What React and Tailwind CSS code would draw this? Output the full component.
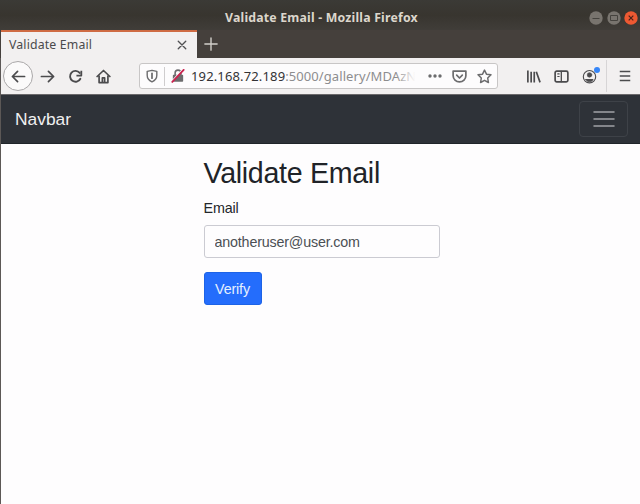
import React from 'react';

const ui = "font-['Noto_Sans','Open_Sans',sans-serif]";

function Icon({ children, className = '', size = 16 }) {
  return (
    <svg
      className={`shrink-0 ${className}`}
      width={size}
      height={size}
      viewBox="0 0 16 16"
      fill="none"
      stroke="currentColor"
      strokeWidth="1.8"
      strokeLinecap="round"
      strokeLinejoin="round"
    >
      {children}
    </svg>
  );
}

function TitleBar() {
  return (
    <header className="flex h-[30px] items-center bg-linear-to-b from-[#3b3a36] via-[#38352f] to-[#403d39] pt-[5px] pr-[2px]">
      <h1 className="ml-[225px] w-[194px] whitespace-nowrap text-[12.3px] leading-4 font-bold tracking-[0.2px] text-[#dcd6cc]">
        Validate Email - Mozilla Firefox
      </h1>
      <div className="ml-auto flex gap-[3.5px]">
        <svg width="14" height="14" viewBox="0 0 14 14" fill="none" stroke="#45433e">
          <circle cx="7" cy="7" r="6.7" fill="#78746e" stroke="none" />
          <path d="M3.5 7.5h7" />
        </svg>
        <svg width="14" height="14" viewBox="0 0 14 14" fill="none" stroke="#45433e">
          <circle cx="7" cy="7" r="6.7" fill="#78746e" stroke="none" />
          <path d="M3.5 4.5h7v5h-7z" />
        </svg>
        <svg width="14" height="14" viewBox="0 0 14 14" fill="none" stroke="#4a2118" strokeWidth="1.2">
          <circle cx="7" cy="7" r="6.7" fill="#ed5932" stroke="none" />
          <path d="m4.7 4.7 4.6 4.6m0-4.6L4.7 9.3" />
        </svg>
      </div>
    </header>
  );
}

function TabStrip() {
  return (
    <div className="flex h-7 bg-[#45403c] pl-px">
      <div className="flex w-[196px] items-center border-t-2 border-[#cf6b43] bg-[#f2f0f0] pl-2 pr-[9px]">
        <span className="whitespace-nowrap text-[12.3px] leading-4 tracking-[0.15px] text-[#4a4a4c]">Validate Email</span>
        <Icon size={12} className="ml-auto text-[#505052]">
          <path d="m3 3 10 10m0-10L3 13" />
        </Icon>
      </div>
      <Icon size={14} className="ml-[7px] mt-[7px] text-[#d2cfca]">
        <path d="M8 1v14M1 8h14" strokeWidth="1.6" />
      </Icon>
    </div>
  );
}

function AddressBar() {
  return (
    <div className="ml-[28px] flex h-[26px] w-[359px] shrink-0 items-center rounded-[3px] border border-[#c8c6c6] bg-[#fdfcfd] pl-[5px] pr-1 text-[#6c6c6e]">
      <Icon size={14}>
        <path d="M8 1.5 2.5 2.7v4.4c0 3.5 2 6 5.5 7.5 3.5-1.5 5.5-4 5.5-7.5V2.7z" strokeWidth="1.6" />
        <path d="M8 5v5.5" strokeWidth="2" />
      </Icon>
      <div className="ml-[5px] h-[19px] w-px bg-[#cfcdce]" />
      <Icon size={14} className="ml-1.5">
        <path d="M4.7 7V4.6a3.3 3.3 0 0 1 6.6 0V7" />
        <path d="M3 7.5h10v6.2H3z" fill="currentColor" />
        <path d="M2 12.7 12.5 1.5" stroke="#fdfcfd" strokeWidth="1.5" />
        <path d="M1.5 14.8 14.5 1" stroke="#ca234f" strokeWidth="2.1" />
      </Icon>
      <div className="relative ml-[6px] w-[229px] overflow-hidden whitespace-nowrap text-[13px] leading-[18px] text-[#8d8d8f]">
        <span className="tracking-[0.14px] text-[#333335]">192.168.72.189</span>
        <span className="tracking-[0.08px]">:5000/gallery/MDAzNW</span>
        <div className="absolute inset-y-0 right-0 w-6 bg-linear-to-r from-transparent to-[#fdfcfd] to-80%" />
      </div>
      <svg width="14" height="4" viewBox="0 0 14 4" fill="currentColor" className="ml-[8px] shrink-0">
        <circle cx="2" cy="2" r="1.7" />
        <circle cx="7" cy="2" r="1.7" />
        <circle cx="12" cy="2" r="1.7" />
      </svg>
      <Icon size={15} className="ml-[10px]">
        <path d="M1.2 2.2h13.6v5a6.8 6.6 0 0 1-13.6 0z" />
        <path d="m5 6.6 3 3 3-3" />
      </Icon>
      <Icon size={15} className="ml-[10px]">
        <path d="m8 1.2 2.1 4.3 4.8.7-3.5 3.4.8 4.8L8 12.1l-4.2 2.3.8-4.8L1.1 6.2l4.8-.7z" strokeWidth="1.6" />
      </Icon>
    </div>
  );
}

function Toolbar() {
  return (
    <div className="flex h-[37px] items-center border-b border-[#6b696b] bg-[#f2f0f0] pl-[2px] text-[#4b4b4d]">
      <div className="flex size-[30px] shrink-0 items-center justify-center rounded-full border border-[#aaa8a9] bg-[#fbfafa]">
        <Icon size={15}>
          <path d="M14.5 8h-13M7 2.5 1.5 8 7 13.5" />
        </Icon>
      </div>
      <Icon size={15} className="ml-[7px]">
        <path d="M1.5 8h13M9 2.5 14.5 8 9 13.5" />
      </Icon>
      <Icon size={15} className="ml-[13px]">
        <path d="M13.2 10.4A5.8 5.8 0 1 1 12.5 4.2" strokeWidth="2" />
        <path d="M14.2 1.8v5.2H9" strokeWidth="1.9" strokeLinecap="butt" />
      </Icon>
      <Icon size={15} className="ml-[13px]">
        <path d="M1.2 8 8 1.6 14.8 8M3.3 7.5v7h9.4v-7" />
        <path d="M6.8 14V9.5h2.4V14" />
      </Icon>
      <AddressBar />
      <Icon size={15} className="ml-[28px]">
        <path d="M2 1.5v13M5.5 3v11.5M8.8 3v11.5M11 3l4 11.3" strokeLinecap="butt" />
      </Icon>
      <Icon size={15} className="ml-[13px]">
        <rect x="1.2" y="2.3" width="13.6" height="11.4" rx="1.7" />
        <path d="M7.8 2.5v11" strokeWidth="1.4" />
        <path d="M4 5.2h1.5M4 8h1.5" strokeWidth="1.2" />
      </Icon>
      <div className="relative ml-[13px]">
        <Icon size={15}>
          <circle cx="8" cy="8.2" r="6.6" strokeWidth="1.2" />
          <circle cx="8" cy="6.3" r="2.4" fill="currentColor" strokeWidth=".7" />
          <path d="M4.2 11.2h7.6C11 13 9.6 13.4 8 13.4s-3-.4-3.8-2.2z" fill="currentColor" strokeWidth="1" />
        </Icon>
        <div className="absolute -top-[2px] -right-[3px] size-[6px] rounded-full bg-[#3686f8]" />
      </div>
      <div className="ml-[9px] h-8 w-px bg-[#d7d5d6]" />
      <Icon size={14} className="ml-[11px]">
        <path d="M2 2.9h12M2 8h12M2 13.1h12" strokeLinecap="butt" />
      </Icon>
    </div>
  );
}

function Navbar() {
  return (
    <nav className="flex h-[49px] items-center justify-between border-b border-[#20252a] bg-[#2e3238] pl-[14px] pr-3">
      <span className="text-[17.4px] leading-6 text-[#f0f0f0]">Navbar</span>
      <button className="flex h-9 w-[49px] items-center justify-center rounded border border-[#3e4248]">
        <svg width="22" height="18" viewBox="0 0 22 18" stroke="#a1a3a6" strokeWidth="1.5" strokeLinecap="round">
          <path d="M1 2h20M1 9h20M1 16h20" />
        </svg>
      </button>
    </nav>
  );
}

export default function App() {
  return (
    <div className="h-[504px] w-[640px] overflow-hidden bg-[#45403c]">
      <div className={ui}>
        <TitleBar />
        <TabStrip />
      </div>
      <div className="h-[446px] border-l border-[#5c5856] bg-[#fefdfe] font-['Liberation_Sans',Arial,sans-serif]">
        <div className={ui}>
          <Toolbar />
        </div>
        <Navbar />
        <main className="ml-[202.5px] w-[236.5px] pt-3 text-[14.3px] leading-[22px] tracking-[-0.15px] text-[#24272b]">
          <h2 className="whitespace-nowrap text-[28.6px] leading-[34px] tracking-[-0.3px] text-[#202328]">Validate Email</h2>
          <label htmlFor="email" className="mt-[7px] block">Email</label>
          <input
            id="email"
            type="email"
            defaultValue="anotheruser@user.com"
            className="mt-1.5 block h-[33px] w-full rounded-[3px] border border-[#cbcbd2] bg-[#fefdfe] px-[10px] tracking-[-0.18px] text-[#4b4f54] outline-none"
          />
          <button className="mt-[14px] block h-[33px] w-[58px] rounded-[3px] border border-[#1d63e6] bg-[#246dfc] text-[#e5f0ff]">Verify</button>
        </main>
      </div>
    </div>
  );
}
